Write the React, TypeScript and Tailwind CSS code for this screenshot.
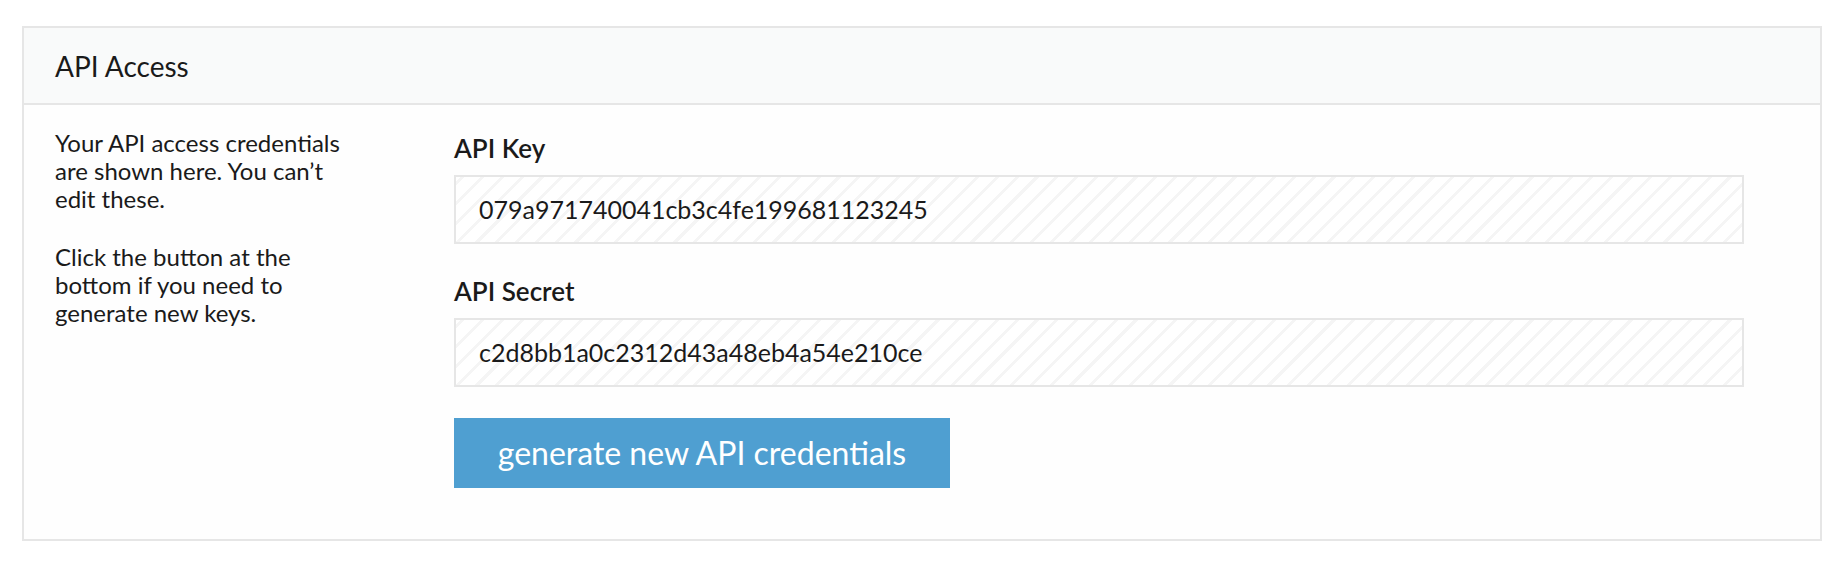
export default function App() {
    const fields = [
        { label: "API Key", value: "079a971740041cb3c4fe199681123245" },
        { label: "API Secret", value: "c2d8bb1a0c2312d43a48eb4a54e210ce" },
    ];

    return (
        <div className="min-h-screen bg-white px-[22px] pt-[26px] font-['Lato',sans-serif] text-[#1a1a1a]">
            <div className="border-2 border-[#e6e6e6] bg-[#fefefe]">
                <div className="flex h-[77px] items-center border-b-2 border-[#e6e6e6] bg-[#f9fafa] px-[31px] text-[28px]">
                    API Access
                </div>

                <div className="flex items-start pb-[51px] pt-[27px]">
                    <div className="-mt-[3px] w-[430px] shrink-0 pl-[31px] pr-[90px] text-[24px] leading-[28px]">
                        <p>
                            Your API access credentials are shown here. You
                            can’t edit these.
                        </p>
                        <p className="mt-[30px]">
                            Click the button at the bottom if you need to
                            generate new keys.
                        </p>
                    </div>

                    <div className="w-[1290px] shrink-0">
                        {fields.map((field, index) => (
                            <div
                                key={field.label}
                                className={index > 0 ? "mt-[31px]" : ""}
                            >
                                <div className="mb-[11px] text-[26px] font-semibold leading-[32px]">
                                    {field.label}
                                </div>
                                <div className="flex h-[69px] items-center border-2 border-[#e6e6e6] bg-[repeating-linear-gradient(-45deg,#ffffff_0px,#ffffff_11px,#f5f5f5_11px,#f5f5f5_14px)] px-[23px] text-[25px]">
                                    {field.value}
                                </div>
                            </div>
                        ))}

                        <button className="mt-[31px] flex h-[70px] w-[496px] items-center justify-center bg-[#4f9fd1] text-[32px] text-white">
                            generate new API credentials
                        </button>
                    </div>
                </div>
            </div>
        </div>
    );
}
